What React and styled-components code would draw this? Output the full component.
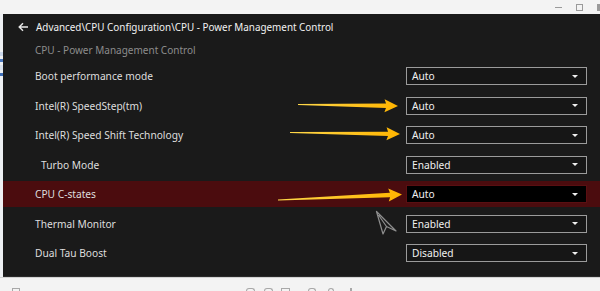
import React from "react";
import styled, { createGlobalStyle } from "styled-components";

const Global = createGlobalStyle`
  html, body { margin: 0; padding: 0; background: #f3f3f3; overflow: hidden; }
  body { font-family: "Noto Sans", "Open Sans", sans-serif; }
`;

const Screen = styled.div`
  width: 600px;
  height: 291px;
  position: relative;
  display: flex;
  flex-direction: column;
  background: #f3f3f3;
  overflow: hidden;
`;

const TitleBar = styled.div`
  height: 14px;
  display: flex;
  justify-content: flex-end;
  align-items: center;
  gap: 14px;
  color: #8a8a8a;
`;

const WinBtn = styled.span`
  width: ${(p) => p.$w || 7}px;
  height: ${(p) => p.$h || 1}px;
  border: ${(p) => (p.$box ? "1px solid #9a9a9a" : "none")};
  background: ${(p) => (p.$box ? "transparent" : "#9a9a9a")};
  box-sizing: border-box;
`;

const Body = styled.div`
  display: flex;
  height: 263px;
`;

const SideStrip = styled.div`
  width: 3px;
  background: #eef0f3;
  display: flex;
  flex-direction: column;
  padding-top: 38px;
  gap: 3px;
`;

const SideMark = styled.span`
  width: 3px;
  height: ${(p) => p.$h}px;
  background: ${(p) => p.$c};
`;

const Panel = styled.div`
  flex: 1;
  background: #1a1a1a;
  display: flex;
  flex-direction: column;
  color: #dcdcdc;
  font-size: 10.2px;
  border-bottom: 1px solid #2a2a2a;
`;

const Header = styled.div`
  height: 25px;
  display: flex;
  align-items: center;
  gap: 7px;
  padding-left: 15px;
  color: #f2f2f2;
  font-size: 9.9px;
`;

const Sub = styled.div`
  height: 22.25px;
  display: flex;
  align-items: center;
  padding-left: 32px;
  color: #8c8c8c;
  font-size: 10px;
`;

const Row = styled.div`
  height: 29.5px;
  display: flex;
  align-items: center;
`;

const RowInner = styled.div`
  flex: 1;
  height: 25.5px;
  display: flex;
  align-items: center;
  justify-content: space-between;
  padding-left: ${(p) => (p.$indent ? 38 : 32)}px;
  padding-right: 13px;
  background: ${(p) => (p.$active ? "#4b0c0e" : "transparent")};
`;

const Label = styled.span`
  color: #dedede;
`;

const Select = styled.div`
  width: 181px;
  height: 18px;
  box-sizing: border-box;
  border: 1.5px solid ${(p) => (p.$active ? "#5a0f12" : "#9b9b9b")};
  background: ${(p) => (p.$active ? "#000000" : "#161616")};
  display: flex;
  align-items: center;
  justify-content: space-between;
  padding: 0 8px 0 5px;
  color: #f0f0f0;
`;

const Caret = styled.span`
  width: 0;
  height: 0;
  border-left: 3px solid transparent;
  border-right: 3px solid transparent;
  border-top: 3px solid #f0f0f0;
`;

const BottomBar = styled.div`
  flex: 1;
  border-top: 1px solid #d2d2d2;
  display: flex;
  align-items: flex-end;
  padding-left: 12px;
`;

const BottomIcon = styled.span`
  width: ${(p) => p.$w}px;
  height: 3px;
  margin-left: ${(p) => p.$ml}px;
  border: 1px solid #a8a8a8;
  border-bottom: none;
  border-radius: ${(p) => (p.$round ? "4px 4px 0 0" : "0")};
  box-sizing: border-box;
`;

const Overlay = styled.svg`
  position: absolute;
  left: 0;
  top: 0;
  pointer-events: none;
`;

const rows = [
  { label: "Boot performance mode", value: "Auto" },
  { label: "Intel(R) SpeedStep(tm)", value: "Auto" },
  { label: "Intel(R) Speed Shift Technology", value: "Auto" },
  { label: "Turbo Mode", value: "Enabled", indent: true },
  { label: "CPU C-states", value: "Auto", active: true },
  { label: "Thermal Monitor", value: "Enabled" },
  { label: "Dual Tau Boost", value: "Disabled" },
];

function Arrow({ x1, y1, x2, y2, id }) {
  const dx = x2 - x1;
  const dy = y2 - y1;
  const len = Math.hypot(dx, dy);
  const ux = dx / len;
  const uy = dy / len;
  const nx = -uy;
  const ny = ux;
  const headL = 12;
  const headW = 6.5;
  const bx = x2 - ux * headL;
  const by = y2 - uy * headL;
  const pts = [
    [x1 + nx * 0.6, y1 + ny * 0.6],
    [bx + nx * 2.2, by + ny * 2.2],
    [bx - ux * 1.5 + nx * headW, by - uy * 1.5 + ny * headW],
    [x2, y2],
    [bx - ux * 1.5 - nx * headW, by - uy * 1.5 - ny * headW],
    [bx - nx * 2.2, by - ny * 2.2],
    [x1 - nx * 0.6, y1 - ny * 0.6],
  ]
    .map((p) => p.map((v) => v.toFixed(2)).join(","))
    .join(" ");
  return (
    <>
      <defs>
        <linearGradient id={id} x1="0" y1="0" x2="1" y2="0">
          <stop offset="0" stopColor="#ffd84a" />
          <stop offset="1" stopColor="#ffb400" />
        </linearGradient>
      </defs>
      <polygon points={pts} fill={`url(#${id})`} />
    </>
  );
}

export default function App() {
  return (
    <Screen>
      <Global />
      <TitleBar>
        <WinBtn $w={7} $h={1} />
        <WinBtn $box $w={7} $h={7} />
        <WinBtn $w={3} $h={7} />
      </TitleBar>
      <Body>
        <SideStrip>
          <SideMark $h={4} $c="#c9d6ea" />
          <SideMark $h={3} $c="#4a78c0" />
          <SideMark $h={5} $c="#d9e2ef" />
          <SideMark $h={3} $c="#3f6fb8" />
        </SideStrip>
        <Panel>
          <Header>
            <svg width="11" height="10" viewBox="0 0 11 10">
              <path d="M10 5H1.5M5 1.2L1.2 5L5 8.8" stroke="#e8e8e8" strokeWidth="1.4" fill="none" />
            </svg>
            <span>Advanced\CPU Configuration\CPU - Power Management Control</span>
          </Header>
          <Sub>CPU - Power Management Control</Sub>
          {rows.map((r) => (
            <Row key={r.label}>
              <RowInner $active={r.active} $indent={r.indent}>
                <Label>{r.label}</Label>
                <Select $active={r.active}>
                  <span>{r.value}</span>
                  <Caret />
                </Select>
              </RowInner>
            </Row>
          ))}
        </Panel>
      </Body>
      <BottomBar>
        <BottomIcon $w={8} $ml={0} />
        <BottomIcon $w={9} $ml={226} $round />
        <BottomIcon $w={9} $ml={9} $round />
        <BottomIcon $w={9} $ml={8} />
        <BottomIcon $w={8} $ml={18} $round />
        <BottomIcon $w={6} $ml={12} $round />
        <BottomIcon $w={2} $ml={16} />
      </BottomBar>
      <Overlay width="600" height="291" viewBox="0 0 600 291">
        <Arrow id="g1" x1={298} y1={104.5} x2={398} y2={106} />
        <Arrow id="g2" x1={290} y1={132.5} x2={400} y2={134} />
        <Arrow id="g3" x1={278} y1={200} x2={402} y2={194.5} />
        <path
          d="M376.5 211.5 L383 234 L386.5 226.5 L396 231 Z M378.5 215 L386.5 226.5"
          fill="none"
          stroke="#8e8e8e"
          strokeWidth="1.2"
          strokeLinejoin="round"
        />
      </Overlay>
    </Screen>
  );
}
